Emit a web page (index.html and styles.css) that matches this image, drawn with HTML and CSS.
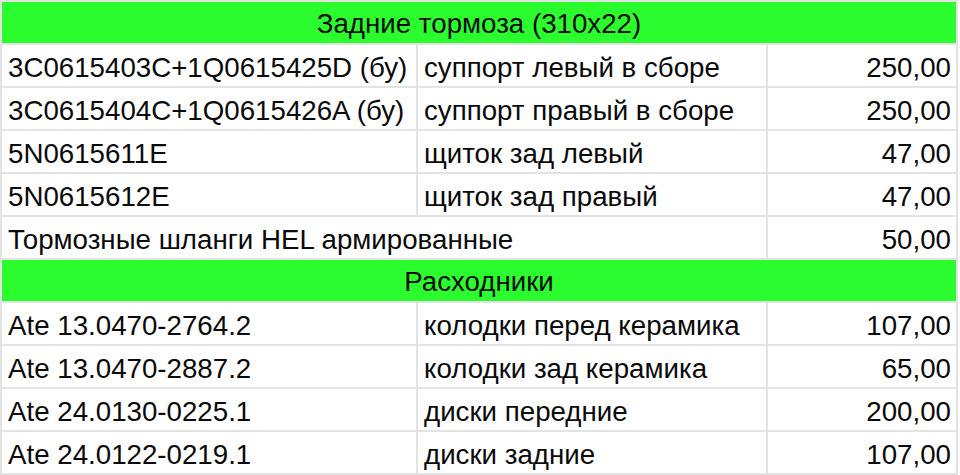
FILE: index.html
```html
<!DOCTYPE html>
<html lang="ru">
<head>
<meta charset="utf-8">
<title>Задние тормоза</title>
<link rel="stylesheet" href="styles.css">
</head>
<body>
<div class="sheet">
  <div class="cell head">Задние тормоза (310x22)</div>

  <div class="cell">3C0615403C+1Q0615425D (бу)</div>
  <div class="cell">суппорт левый в сборе</div>
  <div class="cell num">250,00</div>

  <div class="cell">3C0615404C+1Q0615426A (бу)</div>
  <div class="cell">суппорт правый в сборе</div>
  <div class="cell num">250,00</div>

  <div class="cell">5N0615611E</div>
  <div class="cell">щиток зад левый</div>
  <div class="cell num">47,00</div>

  <div class="cell">5N0615612E</div>
  <div class="cell">щиток зад правый</div>
  <div class="cell num">47,00</div>

  <div class="cell wide">Тормозные шланги HEL армированные</div>
  <div class="cell num">50,00</div>

  <div class="cell head">Расходники</div>

  <div class="cell">Ate 13.0470-2764.2</div>
  <div class="cell">колодки перед керамика</div>
  <div class="cell num">107,00</div>

  <div class="cell">Ate 13.0470-2887.2</div>
  <div class="cell">колодки зад керамика</div>
  <div class="cell num">65,00</div>

  <div class="cell">Ate 24.0130-0225.1</div>
  <div class="cell">диски передние</div>
  <div class="cell num">200,00</div>

  <div class="cell">Ate 24.0122-0219.1</div>
  <div class="cell">диски задние</div>
  <div class="cell num">107,00</div>
</div>
</body>
</html>
```

FILE: styles.css
```css
html, body {
  margin: 0;
  padding: 0;
  background: #ffffff;
}

.sheet {
  width: 958px;
  height: 475px;
  box-sizing: border-box;
  padding: 2px;
  display: grid;
  grid-template-columns: 414px 348px 188px;
  grid-template-rows: repeat(11, 41px);
  gap: 2px;
  background: #e3e3e3;
  font-family: "Liberation Sans", Arial, Helvetica, sans-serif;
  font-size: 27.7px;
  color: #0a0a0a;
  overflow: hidden;
}

.cell {
  background: #ffffff;
  display: flex;
  align-items: center;
  padding: 4px 6px 0 6px;
  line-height: 1;
  white-space: nowrap;
  overflow: hidden;
}

.wide {
  grid-column: 1 / 3;
}

.num {
  justify-content: flex-end;
  padding-right: 5px;
}

.head {
  grid-column: 1 / -1;
  justify-content: center;
  padding-top: 3px;
  background: #2afc2e;
}
```
